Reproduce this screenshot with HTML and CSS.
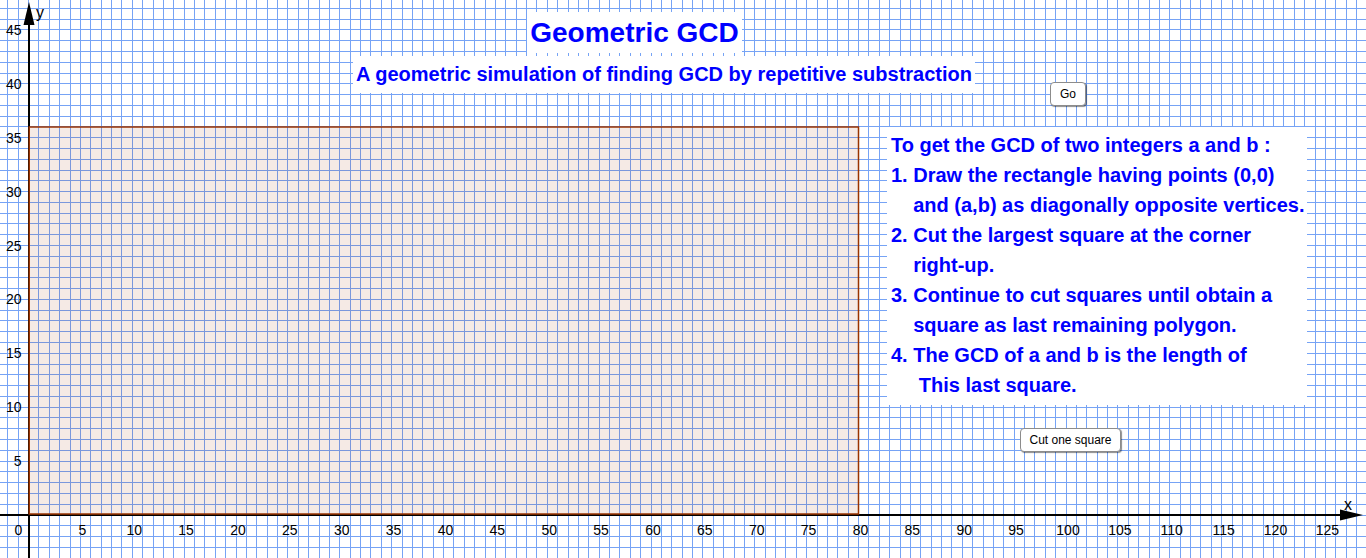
FILE: index.html
```html
<!DOCTYPE html>
<html lang="en">
<head>
	<meta charset="UTF-8">
	<title>Geometric GCD</title>
	<link rel="stylesheet" href="styles.css">
</head>
<body>
	<div id="board">
		<svg id="graph" width="1366" height="558"></svg>

		<div class="caption title">Geometric GCD</div>
		<div class="caption subtitle">A geometric simulation of finding GCD by repetitive substraction</div>

		<div class="caption steps">To get the GCD of two integers a and b :
1. Draw the rectangle having points (0,0)
    and (a,b) as diagonally opposite vertices.
2. Cut the largest square at the corner
    right-up.
3. Continue to cut squares until obtain a
    square as last remaining polygon.
4. The GCD of a and b is the length of
     This last square.</div>

		<button class="btn btn-go">Go</button>
		<button class="btn btn-cut">Cut one square</button>
	</div>

	<script>
		var NS = "http://www.w3.org/2000/svg";
		var oGraph = document.getElementById("graph");

		// origin and unit sizes (px) of the drawing pad
		var ox = 28.5, oy = 515;
		var ux = 10.375, uy = 10.78;

		function add(tag, attrs, text){
			var el = document.createElementNS(NS, tag);
			for (var k in attrs) {
				el.setAttribute(k, attrs[k]);
			}
			if (text != undefined) {
				el.textContent = text;
			}
			oGraph.appendChild(el);
			return el;
		}

		// grid
		for (var i = -2; i <= 128; i++) {
			add("rect", {"class": "grid", x: Math.floor(ox + i*ux), y: 0, width: 1, height: 558});
		}
		for (var j = -3; j <= 47; j++) {
			add("rect", {"class": "grid", x: 0, y: Math.floor(oy - j*uy), width: 1366, height: 1});
		}

		// axes
		add("rect", {"class": "axis", x: 0, y: 514, width: 1345, height: 2});
		add("rect", {"class": "axis", x: 28, y: 20, width: 2, height: 538});
		add("polygon", {"class": "axis", points: "29,2 23.5,25 34.5,25"});
		add("polygon", {"class": "axis", points: "1363,515 1340,509.5 1340,520.5"});
		add("text", {"class": "axis-name", x: 36, y: 18}, "y");
		add("text", {"class": "axis-name", x: 1344, y: 510}, "x");

		// tick labels
		add("text", {"class": "tick", x: 18.5, y: 535, "text-anchor": "middle"}, "0");
		for (var i = 5; i <= 125; i += 5) {
			add("text", {"class": "tick", x: ox + i*ux + 2, y: 535, "text-anchor": "middle"}, i);
		}
		for (var j = 5; j <= 45; j += 5) {
			add("text", {"class": "tick", x: 21.5, y: oy - j*uy + 5, "text-anchor": "end"}, j);
		}

		// the a x b rectangle
		add("rect", {"class": "poly", x: 29.25, y: 127, width: 829.25, height: 387});
	</script>
</body>
</html>
```

FILE: styles.css
```css
*{
	margin: 0;
	padding: 0;
}
body{
	background: #fff;
	font-family: "Liberation Sans", Arial, sans-serif;
}
#board{
	position: relative;
	width: 1366px;
	height: 558px;
	overflow: hidden;
}
#graph{
	position: absolute;
	left: 0;
	top: 0;
}
#graph .grid{
	fill: #76a3f5;
}
#graph .axis{
	fill: #000;
}
#graph .axis-name{
	font-size: 16px;
	fill: #000;
}
#graph .tick{
	font-size: 14px;
	fill: #000;
}
#graph .poly{
	fill: rgba(153, 51, 0, 0.1);
	stroke: #993300;
	stroke-width: 1.5;
}

.caption{
	position: absolute;
	background: #fff;
	color: #0000ff;
	font-weight: bold;
}
.title{
	left: 527px;
	top: 12px;
	width: 215px;
	height: 41px;
	line-height: 41px;
	font-size: 28px;
	text-align: center;
}
.subtitle{
	left: 353px;
	top: 56px;
	width: 619px;
	height: 37px;
	line-height: 37px;
	padding-left: 3px;
	font-size: 20px;
}
.steps{
	left: 887px;
	top: 127px;
	width: 416px;
	height: 275px;
	padding: 3px 0 0 4px;
	line-height: 30px;
	font-size: 20px;
	white-space: pre;
}

.btn{
	position: absolute;
	height: 24px;
	background: #fff;
	border: 1px solid #8c8c8c;
	border-radius: 4px;
	box-shadow: 1px 1px 1px rgba(0, 0, 0, 0.45);
	font-family: "Liberation Sans", Arial, sans-serif;
	font-size: 12px;
	color: #000;
}
.btn-go{
	left: 1050px;
	top: 82px;
	width: 36px;
}
.btn-cut{
	left: 1020px;
	top: 428px;
	width: 101px;
}
```
